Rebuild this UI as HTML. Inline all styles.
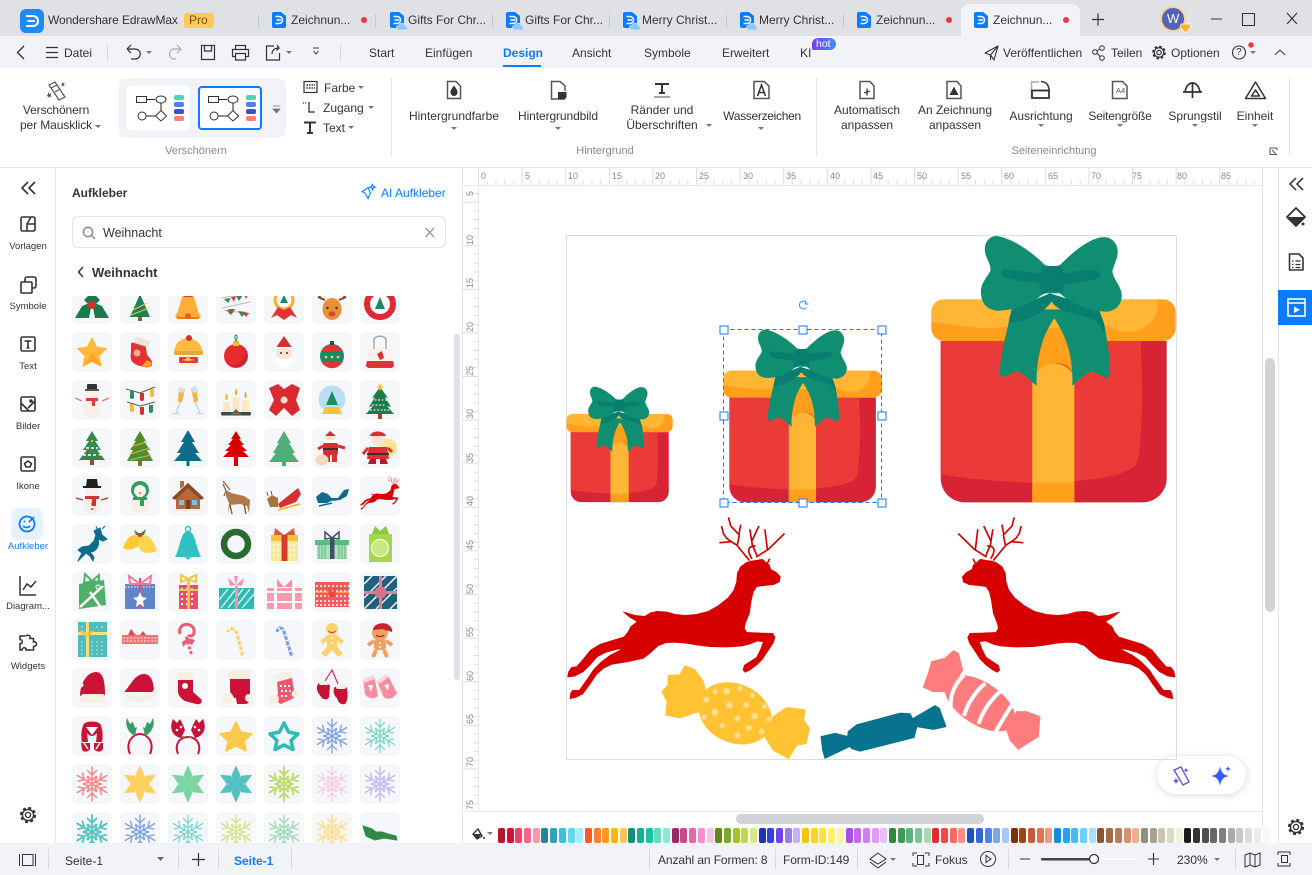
<!DOCTYPE html>
<html lang="de"><head><meta charset="utf-8"><title>Wondershare EdrawMax</title>
<style>
html,body{margin:0;padding:0;width:1312px;height:875px;overflow:hidden;background:#fff}
body{font-family:"Liberation Sans","Noto Sans CJK SC",sans-serif;font-size:12px;color:#333;position:relative}
.b{position:absolute}
.t{position:absolute;line-height:16px;white-space:nowrap}
.c{position:absolute;line-height:15px;white-space:nowrap;text-align:center;transform:translateX(-50%)}
.g{color:#8a8a8a}
.s{font-size:9.5px;color:#333}
.sw{position:absolute;left:498px;top:828px;height:15px;display:flex}
.sw i{display:block;width:7px;height:15px;margin-right:1.7px;border-radius:2px}
svg{position:absolute;left:0;top:0}
</style></head><body>
<div class="b" style="left:0;top:0;width:1312px;height:36px;background:#e0e1e5"></div>
<div class="b" style="left:0;top:36px;width:1312px;height:32px;background:#f2f3f8"></div>
<div class="b" style="left:961px;top:4px;width:119px;height:32px;background:#f2f3f8;border-radius:8px 8px 0 0"></div>
<div class="b" style="left:0;top:167px;width:1312px;height:1px;background:#e6e7eb"></div>
<div class="b" style="left:118px;top:78px;width:168px;height:60px;background:#f2f3f8;border-radius:8px"></div>
<div class="b" style="left:126px;top:86px;width:64px;height:44px;background:#fff;border-radius:4px"></div>
<div class="b" style="left:198px;top:86px;width:60px;height:40px;background:#fff;border:2px solid #0a7cff;border-radius:4px"></div>
<div class="b" style="left:184px;top:13px;width:30px;height:15px;background:#ffc85c;border-radius:3px"></div>
<div class="b" style="left:812px;top:38px;width:24px;height:12px;background:linear-gradient(90deg,#7a3cf0,#3f8cff);border-radius:7px 7px 7px 2px"></div>
<div class="b" style="left:55px;top:168px;width:1px;height:675px;background:#e6e7eb"></div>
<div class="b" style="left:462px;top:168px;width:1px;height:675px;background:#e6e7eb"></div>
<div class="b" style="left:1278px;top:168px;width:1px;height:675px;background:#e6e7eb"></div>
<div class="b" style="left:1262px;top:168px;width:1px;height:660px;background:#e6e7eb"></div>
<div class="b" style="left:11px;top:508px;width:32px;height:32px;background:#e7f2ff;border-radius:7px"></div>
<div class="b" style="left:72px;top:216px;width:372px;height:30px;border:1px solid #e3e4e8;border-radius:6px"></div>
<div class="b" style="left:454px;top:334px;width:6px;height:346px;background:#e0e1e6;border-radius:3px"></div>
<div class="b" style="left:1265px;top:358px;width:10px;height:254px;background:#d2d3d6;border-radius:5px"></div>
<div class="b" style="left:736px;top:814px;width:248px;height:10px;background:#d2d3d6;border-radius:5px"></div>
<div class="b" style="left:1278px;top:290px;width:34px;height:35px;background:#0a7cff"></div>
<div class="b" style="left:0;top:843px;width:1312px;height:32px;background:#f2f3f8"></div>
<div class="b" style="left:1157px;top:756px;width:89px;height:38px;background:#fff;border-radius:19px;box-shadow:0 1px 8px rgba(0,0,0,.16)"></div>
<div class="b" style="left:565.5px;top:234.5px;width:609px;height:523px;border:1px solid #dcdcdc"></div>

<div class="sw">
<i style="background:#b5172b"></i><i style="background:#d01135"></i><i style="background:#ee4266"></i><i style="background:#f5668a"></i><i style="background:#f999ad"></i>
<i style="background:#29819c"></i><i style="background:#2fa3bd"></i><i style="background:#42bddd"></i><i style="background:#62d8f0"></i><i style="background:#a7ecfb"></i>
<i style="background:#f85a26"></i><i style="background:#fb7f35"></i><i style="background:#fc9a20"></i><i style="background:#feb414"></i><i style="background:#ffc45c"></i>
<i style="background:#0f907c"></i><i style="background:#13b098"></i><i style="background:#17c4a2"></i><i style="background:#66d9c0"></i><i style="background:#8ce8d6"></i>
<i style="background:#9c2a62"></i><i style="background:#c84a8c"></i><i style="background:#e466ac"></i><i style="background:#fb8ccd"></i><i style="background:#f6c3e0"></i>
<i style="background:#62861a"></i><i style="background:#7aa82a"></i><i style="background:#a0c52b"></i><i style="background:#bfd850"></i><i style="background:#d8e88a"></i>
<i style="background:#2230b5"></i><i style="background:#3241d6"></i><i style="background:#6745ea"></i><i style="background:#9a7cf2"></i><i style="background:#c3b1f7"></i>
<i style="background:#fdc303"></i><i style="background:#fdd221"></i><i style="background:#fee23e"></i><i style="background:#fff06a"></i><i style="background:#fff59c"></i>
<i style="background:#a84fde"></i><i style="background:#c766f2"></i><i style="background:#d67cf5"></i><i style="background:#e09bf8"></i><i style="background:#ebbdfb"></i>
<i style="background:#2a8a3f"></i><i style="background:#3a9d55"></i><i style="background:#5cb27a"></i><i style="background:#7bc493"></i><i style="background:#a4dab5"></i>
<i style="background:#e52b2b"></i><i style="background:#f24a41"></i><i style="background:#f56a5e"></i><i style="background:#fa8f84"></i>
<i style="background:#1f50c0"></i><i style="background:#2f66d9"></i><i style="background:#4a83e9"></i><i style="background:#79a7f3"></i><i style="background:#a9c8f9"></i>
<i style="background:#7e3108"></i><i style="background:#a04510"></i><i style="background:#c65c3a"></i><i style="background:#db7650"></i><i style="background:#ec9a80"></i>
<i style="background:#0f8fdc"></i><i style="background:#25a4ee"></i><i style="background:#48baf8"></i><i style="background:#6fcffc"></i><i style="background:#a1e1fd"></i>
<i style="background:#8c5436"></i><i style="background:#a7694a"></i><i style="background:#b9795a"></i><i style="background:#d9926b"></i><i style="background:#eeb08c"></i>
<i style="background:#8f8f80"></i><i style="background:#a5a090"></i><i style="background:#c9c5b2"></i><i style="background:#dcd9c7"></i><i style="background:#f1efdd"></i>
<i style="background:#1a1a1a"></i><i style="background:#333"></i><i style="background:#4f4f4f"></i><i style="background:#666"></i><i style="background:#808080"></i><i style="background:#aaa"></i><i style="background:#c8c8c8"></i><i style="background:#dcdcdc"></i><i style="background:#ececec"></i><i style="background:#f7f7f7"></i>
</div>

<svg width="1312" height="875" viewBox="0 0 1312 875" fill="none">
<defs>
<pattern id="rh" x="478" y="168" width="43.6" height="17" patternUnits="userSpaceOnUse">
<path d="M.5 0V17" stroke="#dcdde1"/><path d="M9.2 12V17M17.9 12V17M26.7 12V17M35.4 12V17" stroke="#dcdde1"/></pattern>
<pattern id="rv" x="463" y="158" width="15" height="43.6" patternUnits="userSpaceOnUse">
<path d="M0 .5H15" stroke="#dcdde1"/><path d="M10 9.2H15M10 17.9H15M10 26.7H15M10 35.4H15" stroke="#dcdde1"/></pattern>
<g id="tabd"><path d="M0 2a2 2 0 012-2h7l5 4v10a2 2 0 01-2 2H2a2 2 0 01-2-2z" fill="#0a7cff"/><path d="M3.5 4.5H7a3.5 3.5 0 010 7H3.5M4.5 8H9" stroke="#fff" stroke-width="1.5"/></g>
<g id="tabc"><use href="#tabd"/><path d="M9 18a2.5 2.5 0 010-5 3.5 3.5 0 016.5 1 2 2 0 010 4z" fill="#8cc7ff" stroke="#e0e1e5" stroke-width=".7"/></g>
<g id="dd"><path d="M0 0h6l-3 3z" fill="#777"/></g>
<g id="gear" stroke="#333"><circle r="2.6" stroke-width="1.3"/><circle r="5.6" stroke-width="1.4"/><circle r="7" stroke-width="2.2" stroke-dasharray="3 2.5"/></g>
<g id="gift">
<path d="M92 333H770V745a72 72 0 01-72 72H164a72 72 0 01-72-72Z" fill="#d62336"/>
<path d="M92 333H692C696 430 700 520 690 640C688 690 680 705 665 715C610 745 540 750 430 758C320 760 200 750 92 733Z" fill="#ea3b38"/>
<path d="M367 440C390 390 470 385 493 440V817H367Z" fill="#ffb635"/>
<rect x="367" y="758" width="126" height="59" fill="#ff9f1c"/>
<path d="M433 265C400 310 385 370 380 430C400 395 470 385 490 430C490 370 470 310 433 265Z" fill="#ff9f1c"/>
<rect x="64" y="208" width="733" height="125" rx="38" fill="#ff9f1c"/>
<path d="M64 275V246a38 38 0 0138-38H742C750 270 700 310 650 305C600 300 560 260 520 280C420 310 300 280 250 295C180 295 120 282 64 275Z" fill="#ffb635"/>
<path d="M305 238C295 290 270 370 270 430C272 442 280 442 290 438C305 428 318 424 325 425C345 435 362 452 380 468C378 380 395 320 433 265C470 320 490 380 487 468C505 450 528 430 545 425C560 428 578 440 590 443C600 443 600 430 600 420C598 370 590 290 565 238Z" fill="#108e72"/>
<path d="M295 280C350 275 400 250 425 215C450 255 520 250 560 275C570 285 580 305 585 320C590 290 575 260 565 235L420 190L305 238Z" fill="#087e70"/>
<path d="M405 105C370 70 310 25 260 18C230 18 218 50 228 78C235 95 245 110 240 125C225 150 210 165 213 190C215 225 235 242 270 242C320 240 370 220 400 190L450 190C480 220 540 244 590 245C620 242 638 220 635 190C630 165 612 150 607 125C610 105 628 80 622 55C615 25 590 15 560 25C520 38 480 75 450 105C435 110 420 110 405 105Z" fill="#108e72"/>
<path d="M285 118L390 130V160C350 155 300 150 280 140C272 130 276 118 285 118ZM460 132C500 122 540 118 562 122C575 128 572 142 562 146C530 155 490 160 460 165Z" fill="#087e70"/>
<path d="M395 120C410 104 445 104 458 118C462 145 465 175 458 195C440 178 420 182 395 195C385 175 388 140 395 120Z" fill="#087e70"/>
</g>
<g id="deer" style="fill:currentColor">
<polygon stroke="currentColor" stroke-width="2" stroke-linejoin="round" points="190,306 225,316 255,319 272,308 292,304 320,306 345,313 375,316 410,313 445,304 475,287 505,263 522,240 530,215 532,190 542,170 560,157 575,153 590,151 608,148 618,158 628,165 632,178 650,188 661,200 658,216 640,224 610,227 590,230 580,245 574,270 568,310 556,340 553,355 560,367 600,369 638,370 645,382 640,398 622,425 608,447 590,465 570,480 556,487 549,480 553,466 570,455 590,442 602,418 610,395 592,393 570,402 545,408 500,411 450,410 410,405 380,400 345,397 318,398 295,407 272,428 250,445 205,455 155,463 130,475 110,493 90,522 68,552 48,562 30,566 32,550 38,541 58,541 80,510 100,480 125,455 150,436 188,417 170,418 135,428 112,440 90,465 70,485 45,498 23,501 26,485 35,472 50,470 72,445 92,420 120,403 155,392 192,381 205,365 212,350 232,335 210,322"/>
<path d="M567 150L530 105L514 95L480 98M514 95L500 85L490 70L485 50M532 105L538 75L512 48L506 24M537 72L542 46M590 140L625 118L672 72M622 118L615 60M590 135L577 105L570 60M576 92L596 50M575 145C560 120 565 108 585 108M600 150L612 155M628 148L622 160" stroke="currentColor" stroke-width="5" stroke-linecap="round" fill="none"/>
</g>
<g id="arm"><path d="M20 20V3M15.5 6.5L20 11L24.5 6.5M16 12.5L20 16.5L24 12.5"/></g>
<g id="fl" fill="none" stroke="currentColor" stroke-linecap="round"><use href="#arm"/><use href="#arm" transform="rotate(60 20 20)"/><use href="#arm" transform="rotate(120 20 20)"/><use href="#arm" transform="rotate(180 20 20)"/><use href="#arm" transform="rotate(240 20 20)"/><use href="#arm" transform="rotate(300 20 20)"/></g>
<g id="arm2"><path d="M20 20L16 11.5L20 2.5L24 11.5Z" fill="currentColor" stroke="currentColor" stroke-linejoin="round"/></g>
<g id="fl2" fill="none"><use href="#arm2"/><use href="#arm2" transform="rotate(60 20 20)"/><use href="#arm2" transform="rotate(120 20 20)"/><use href="#arm2" transform="rotate(180 20 20)"/><use href="#arm2" transform="rotate(240 20 20)"/><use href="#arm2" transform="rotate(300 20 20)"/></g>
<clipPath id="cp"><rect x="72" y="296" width="340" height="547"/></clipPath>
<g id="cell"><rect width="40" height="40" rx="6" fill="#f6f7fb"/></g>
<g id="diag">
<rect x="136.5" y="96.5" width="10" height="6" stroke="#333"/><ellipse cx="161" cy="99.5" rx="5" ry="3.5" stroke="#333"/><circle cx="142" cy="116" r="4" stroke="#333"/><path d="M161 110.5L166.5 116L161 121L155.5 116Z" stroke="#333"/><path d="M147 99.5H155M161 103V110M146 116H155" stroke="#222"/>
<rect x="174" y="95" width="10" height="5" rx="2" fill="#4fd1b5"/><rect x="174" y="102" width="10" height="5" rx="2" fill="#4f7ff0"/><rect x="174" y="109" width="10" height="5" rx="2" fill="#3f4fc4"/><rect x="174" y="116" width="10" height="5" rx="2" fill="#ff7d7d"/>
</g>
<g id="sq"><rect x="-3.5" y="-3.5" width="8" height="8" fill="#fff" stroke="#0a7cff"/></g>
</defs>

<!-- tab bar -->
<rect x="20" y="9" width="24" height="24" rx="6" fill="#1e8cf8"/><path d="M26 16H33a5 5 0 010 10H26M27.5 21H35" stroke="#fff" stroke-width="2"/>
<path d="M258.5 14V28M375.5 14V28M492.5 14V28M609.5 14V28M726.5 14V28M843.5 14V28" stroke="#c8c9cd"/>
<use href="#tabd" x="272" y="12"/><use href="#tabc" x="390" y="12"/><use href="#tabc" x="506" y="12"/><use href="#tabc" x="623" y="12"/><use href="#tabc" x="740" y="12"/><use href="#tabd" x="857" y="12"/><use href="#tabd" x="974" y="12"/>
<circle cx="364" cy="20" r="3" fill="#f5333f"/><circle cx="949" cy="20" r="3" fill="#f5333f"/><circle cx="1066" cy="20" r="3" fill="#f5333f"/>
<path d="M1098 13.5V25.5M1092 19.5H1104" stroke="#333" stroke-width="1.2"/>
<circle cx="1173" cy="19" r="12" fill="#5362ba" stroke="#fbd38a" stroke-width="2"/>
<path d="M1181 24h9l1 3-5.5 6-5.5-6z" fill="#f9b62e" stroke="#fff" stroke-width=".7"/>
<path d="M1211 19H1222M1242.5 13.5H1254.5V25.5H1242.5ZM1287 13L1297 24M1297 13L1287 24" stroke="#333" stroke-width="1.1"/>

<!-- toolbar -->
<path d="M24 46L17.5 52.5L24 59" stroke="#333" stroke-width="1.3"/>
<path d="M46 47.5H58M46 52.5H58M46 57.5H58" stroke="#333" stroke-width="1.2"/>
<path d="M107.5 44V61M340.5 44V61" stroke="#d8d9dd"/>
<path d="M127 49L131 45M127 49L131 53M127 49H135C142 49 142 59 135 59H131" stroke="#333" stroke-width="1.2"/>
<use href="#dd" x="146" y="51"/>
<path d="M181 49L177 45M181 49L177 53M181 49H174C168 49 168 59 174 59H176" stroke="#aaa" stroke-width="1.2"/>
<path d="M201.5 45.5H214.5V59.5H201.5ZM204.5 45.5V51H211.5V45.5" stroke="#333" stroke-width="1.2"/>
<path d="M235.5 49.5V45.5H245.5V49.5M235.5 56.5H232.5V49.5H248.5V56.5H245.5M235.5 53.5H245.5V60H235.5Z" stroke="#333" stroke-width="1.2"/>
<path d="M274 46H266.5V60H279.5V53M272 54C272 50 275 48 279 48L277 45M279 48L276.5 50.5" stroke="#333" stroke-width="1.2"/>
<use href="#dd" x="286" y="51"/>
<path d="M313 48H319M313.5 51L316 54L318.5 51" stroke="#444" stroke-width="1"/>
<rect x="503" y="65" width="38" height="2" fill="#0a7cff"/>
<path d="M985 53L998 46L994 60L990.5 55ZM990.5 55L998 46M990.5 55V60" stroke="#333" stroke-width="1.1" stroke-linejoin="round"/>
<circle cx="1095" cy="52" r="2.3" stroke="#333"/><circle cx="1102" cy="48" r="2.3" stroke="#333"/><circle cx="1102" cy="58" r="2.3" stroke="#333"/><path d="M1097 51L1100 49M1097 53L1100 56.5" stroke="#333"/>
<use href="#gear" transform="translate(1159,52.5) scale(.85)"/>
<circle cx="1239" cy="52.5" r="6.5" stroke="#333" stroke-width="1.1"/><use href="#dd" x="1250" y="51"/><circle cx="1251" cy="45" r="2.7" fill="#f5333f"/>
<path d="M1275 55L1280 50L1285 55" stroke="#444" stroke-width="1.1"/>

<!-- ribbon -->
<g stroke="#555" stroke-width="1.2"><path d="M49 85L55 82L65 97L59 100Z"/><path d="M51 88L57 85M60 89L55 92"/></g><path d="M48 92l1.5 2 2-1-1 2 1.5 1.5-2 0-1 2-.5-2-2-.5 1.5-1.5ZM62 82l1 1.5 1.5-.5-.5 1.5 1 1-1.5 0-.5 1.500-.5-1.5-1.5-.5 1-1Z" fill="#555"/>
<use href="#dd" x="95" y="125"/>
<use href="#diag"/><use href="#diag" x="72"/>
<path d="M273 106H280M273 109h7l-3.5 4z" fill="#777" stroke="#777" stroke-width=".8"/>
<rect x="304" y="81.5" width="13" height="11" stroke="#333" stroke-width="1.2" fill="#fff"/><path d="M306.500 85H315M306.500 88H315" stroke="#333" stroke-width="1.5" stroke-dasharray="1.5 1"/>
<use href="#dd" x="358" y="86"/><use href="#dd" x="368" y="106"/><use href="#dd" x="348" y="126"/>
<path d="M309 102V112H315" stroke="#333" stroke-width="1.3"/><path d="M303 103H306" stroke="#333" stroke-width="1.3" stroke-dasharray="1 1"/>
<path d="M304 122.5H316M310 122.5V133M307 133H313" stroke="#333" stroke-width="2"/>
<path d="M391.5 78V157M816.5 78V157M1289.5 78V157" stroke="#e6e7eb"/>
<path d="M447.5 81.5H456L460.5 86V98.5H447.5Z" stroke="#555" stroke-width="1.5"/><path d="M454 86C451 90 450.5 91 450.500 93a3.5 3.5 0 007 0C457.5 91 457 90 454 86Z" transform="translate(0,-.5)" fill="#333"/>
<path d="M565 99H551.5V81.5H560L565 86V91" stroke="#555" stroke-width="1.5"/><path d="M558 92H566.5V98L563.5 99.5H558Z" fill="#333"/>
<use href="#dd" x="451" y="127"/><use href="#dd" x="555" y="127"/><use href="#dd" x="706" y="124"/><use href="#dd" x="758" y="127"/>
<path d="M655 84H669M662 84V93M659 93H665" stroke="#333" stroke-width="2"/><path d="M654 97H670" stroke="#888" stroke-width="1.5"/>
<path d="M754 81.5H764L769 86V98.5H754Z" stroke="#555" stroke-width="1.5"/><path d="M757.500 96L761.500 85L765.500 96M759 92.500H764" stroke="#333" stroke-width="1.5"/>
<path d="M860 81.5H870L874 86V98.5H860Z" stroke="#555" stroke-width="1.5"/><path d="M864 90.5H867V93.5M870 89.5H867V86.5" stroke="#333" stroke-width="1.3" transform="translate(0,2)"/>
<path d="M947 81.5H957L961 86V98.5H947Z" stroke="#555" stroke-width="1.5"/><path d="M954 86.5L958.5 95H949.5Z" fill="#333"/>
<path d="M1031.5 97V82H1039M1031.5 82V90" stroke="#aaa" stroke-width="1.5"/><path d="M1039 90.5H1049C1049 85 1046 82 1041 81.5" stroke="#333" stroke-width="1.5"/><rect x="1032" y="90.5" width="17" height="7.5" stroke="#333" stroke-width="1.8"/>
<path d="M1112.5 81.5H1122.5L1127 86V98.5H1112.5Z" stroke="#555" stroke-width="1.5"/>
<path d="M1183 92H1202M1192.5 82V98M1185 92C1186 86 1189 83 1192.5 83C1196 83 1199 86 1200 92" stroke="#333" stroke-width="1.7"/>
<path d="M1255.5 82L1265.5 98.5H1245.5ZM1255.5 90L1259.5 96H1251.5Z" stroke="#333" stroke-width="1.5" stroke-linejoin="round"/>
<use href="#dd" x="1038" y="124"/><use href="#dd" x="1117" y="124"/><use href="#dd" x="1192" y="124"/><use href="#dd" x="1252" y="124"/>
<path d="M1270 148V154.5H1277M1270 148H1277V150M1272 150L1276 154" stroke="#555" stroke-width="1"/>

<!-- left sidebar -->
<path d="M28 182L22 188L28 194M35 182L29 188L35 194" stroke="#333" stroke-width="1.6"/>
<g stroke="#333" stroke-width="1.6" stroke-linejoin="round">
<rect x="21" y="217" width="14" height="14" rx="1.5"/><path d="M27 231V224H35M27 224L31 217"/>
<rect x="21" y="282" width="11" height="11" rx="1"/><path d="M25 282V279C25 277 26 277 27 277H34C35 277 36 278 36 279V286C36 287 35 288 34 288H32"/>
<rect x="21" y="337" width="14" height="14" rx="1.5"/><path d="M24.5 341H31.5M28 341V348M26.5 348H29.5"/>
<rect x="21" y="397" width="14" height="14" rx="1.5"/><path d="M21 403L29 411M35 401L28 408"/><circle cx="31" cy="401" r="1" fill="#333"/>
<rect x="21" y="457" width="14" height="14" rx="1.5"/><path d="M28 461L31.5 463.5L30 467H26L24.5 463.5Z"/>
</g>
<circle cx="27" cy="524" r="7.5" stroke="#0a7cff" stroke-width="1.8"/><path d="M23 526c2 2 5 2 7 0M24 521l1 1M29 521l1 1M34 517l-5 5" stroke="#0a7cff" stroke-width="1.6"/>
<path d="M20 576V595H36M23 590L27 584L31 587L36 581" stroke="#333" stroke-width="1.5"/>
<path d="M26 636c2-2 5 0 4 2.5h3.5v3.5c3-1.5 5 4 0 4.5v3.5H26c1-3-4-3-4 0H20v-6.5c3 1 3-4 0-4v-3.5h5.5" stroke="#333" stroke-width="1.5"/>
<use href="#gear" transform="translate(28,815)"/>

<!-- panel -->
<path d="M368 188L370.5 193.5L368 199L365 193.5L362 192L365 190.5ZM372.5 185l.8 2 2 .7-2 .8-.8 2-.8-2-2-.8 2-.7Z" stroke="#0a7cff" stroke-width="1.1" transform="translate(0,-.5)"/>
<circle cx="88" cy="232" r="4.6" stroke="#888" stroke-width="1.5"/><path d="M91.5 235.5L95 239" stroke="#888" stroke-width="1.5"/>
<path d="M425.5 228L434 237M434 228L425.5 237" stroke="#999" stroke-width="1.3"/>
<path d="M83 267L78.5 272L83 277" stroke="#333" stroke-width="1.5"/>

<!-- stickers -->
<g clip-path="url(#cp)">
<g id="grid">
<use href="#cell" x="72" y="284"/><use href="#cell" x="120" y="284"/><use href="#cell" x="168" y="284"/><use href="#cell" x="216" y="284"/><use href="#cell" x="264" y="284"/><use href="#cell" x="312" y="284"/><use href="#cell" x="360" y="284"/>
<use href="#cell" x="72" y="332"/><use href="#cell" x="120" y="332"/><use href="#cell" x="168" y="332"/><use href="#cell" x="216" y="332"/><use href="#cell" x="264" y="332"/><use href="#cell" x="312" y="332"/><use href="#cell" x="360" y="332"/>
<use href="#cell" x="72" y="380"/><use href="#cell" x="120" y="380"/><use href="#cell" x="168" y="380"/><use href="#cell" x="216" y="380"/><use href="#cell" x="264" y="380"/><use href="#cell" x="312" y="380"/><use href="#cell" x="360" y="380"/>
<use href="#cell" x="72" y="428"/><use href="#cell" x="120" y="428"/><use href="#cell" x="168" y="428"/><use href="#cell" x="216" y="428"/><use href="#cell" x="264" y="428"/><use href="#cell" x="312" y="428"/><use href="#cell" x="360" y="428"/>
<use href="#cell" x="72" y="476"/><use href="#cell" x="120" y="476"/><use href="#cell" x="168" y="476"/><use href="#cell" x="216" y="476"/><use href="#cell" x="264" y="476"/><use href="#cell" x="312" y="476"/><use href="#cell" x="360" y="476"/>
<use href="#cell" x="72" y="524"/><use href="#cell" x="120" y="524"/><use href="#cell" x="168" y="524"/><use href="#cell" x="216" y="524"/><use href="#cell" x="264" y="524"/><use href="#cell" x="312" y="524"/><use href="#cell" x="360" y="524"/>
<use href="#cell" x="72" y="572"/><use href="#cell" x="120" y="572"/><use href="#cell" x="168" y="572"/><use href="#cell" x="216" y="572"/><use href="#cell" x="264" y="572"/><use href="#cell" x="312" y="572"/><use href="#cell" x="360" y="572"/>
<use href="#cell" x="72" y="620"/><use href="#cell" x="120" y="620"/><use href="#cell" x="168" y="620"/><use href="#cell" x="216" y="620"/><use href="#cell" x="264" y="620"/><use href="#cell" x="312" y="620"/><use href="#cell" x="360" y="620"/>
<use href="#cell" x="72" y="668"/><use href="#cell" x="120" y="668"/><use href="#cell" x="168" y="668"/><use href="#cell" x="216" y="668"/><use href="#cell" x="264" y="668"/><use href="#cell" x="312" y="668"/><use href="#cell" x="360" y="668"/>
<use href="#cell" x="72" y="716"/><use href="#cell" x="120" y="716"/><use href="#cell" x="168" y="716"/><use href="#cell" x="216" y="716"/><use href="#cell" x="264" y="716"/><use href="#cell" x="312" y="716"/><use href="#cell" x="360" y="716"/>
<use href="#cell" x="72" y="764"/><use href="#cell" x="120" y="764"/><use href="#cell" x="168" y="764"/><use href="#cell" x="216" y="764"/><use href="#cell" x="264" y="764"/><use href="#cell" x="312" y="764"/><use href="#cell" x="360" y="764"/>
<use href="#cell" x="72" y="812"/><use href="#cell" x="120" y="812"/><use href="#cell" x="168" y="812"/><use href="#cell" x="216" y="812"/><use href="#cell" x="264" y="812"/><use href="#cell" x="312" y="812"/><use href="#cell" x="360" y="812"/>
</g>
<!-- row 0 -->
<g transform="translate(72,284)"><path d="M3 34L10 22L20 18L17 34Z M37 34L30 22L20 18L23 34Z M20 8L12 16L20 24L28 16Z" fill="#1b7a4a"/><circle cx="20" cy="21" r="4" fill="#d62f2f"/></g>
<g transform="translate(120,284)"><path d="M20 10L30 33H10Z" fill="#1f7f5c"/><path d="M13 26L27 19M11 31L29 24" stroke="#f4c542"/><rect x="18" y="33" width="4" height="4" fill="#9b5b2e"/></g>
<g transform="translate(168,284)"><path d="M20 8C12 8 13 24 7 33H33C27 24 28 8 20 8Z" fill="#ffae34"/><path d="M7 33H33L30 35H10Z" fill="#f07d12"/><circle cx="20" cy="32" r="3" fill="#e0641a"/><path d="M13 8H27L24 13H16Z" fill="#e33b3b"/></g>
<g transform="translate(216,284)"><path d="M6 14L34 8M6 24L34 18M8 26L34 30" stroke="#bbb"/><path d="M8 15l4 4 3-5ZM20 12l3 5 4-6ZM10 26l5 5 3-4ZM22 27l4 6 4-5Z" fill="#2e8b57"/><path d="M15 13l3 5 2-6ZM12 25l4 5 3-5ZM28 10l2 5 3-6ZM26 28l4 5 3-4Z" fill="#d93c3c"/></g>
<g transform="translate(264,284)"><circle cx="20" cy="16" r="9" stroke="#fbb02c" stroke-width="3"/><path d="M7 34L14 23L20 26L26 23L33 34L27 31L20 36L13 31Z" fill="#e23434"/><path d="M20 11L24 19H16Z" fill="#1f8a62"/></g>
<g transform="translate(312,284)"><ellipse cx="20" cy="25" rx="9.5" ry="11" fill="#e89035"/><circle cx="15.5" cy="24" r="1.2" fill="#333"/><circle cx="24.5" cy="24" r="1.2" fill="#333"/><ellipse cx="20" cy="30" rx="3.5" ry="2.5" fill="#d9423b"/><path d="M13 16L6 13M27 16L34 13M9 15L7 11M31 15L33 11" stroke="#8a3d20" stroke-width="1.8"/></g>
<g transform="translate(360,284)"><circle cx="20" cy="20" r="13" stroke="#dd2a33" stroke-width="6"/><circle cx="20" cy="20" r="9.5" fill="#fff"/><path d="M20 13L25 25H15Z" fill="#1f8a62"/></g>
<!-- row 1 -->
<g transform="translate(72,332)"><path d="M20 6L24.5 15L34.5 16.5L27 24L29 34L20 29.5L11 34L13 24L5.5 16.5L15.5 15Z" fill="#ffb93a" stroke="#ffb93a" stroke-linejoin="round"/><path d="M20 20L29 34L20 29.5L13 33Z" fill="#ffa423"/></g>
<g transform="translate(120,332)"><path d="M11 11L25 9L27 23C31 27 33 30 32 33C29 37 24 35 21 34C14 33 9 29 11 21Z" fill="#e4302f"/><path d="M16 4L31 10L27 15L14 11Z" fill="#f3e3d3"/><circle cx="17" cy="21" r="3.5" fill="#f6a8a0"/><path d="M22 34C27 36 31 35 32 31L27 28Z" fill="#f7a623"/></g>
<g transform="translate(168,332)"><path d="M6 20C7 10 14 6 20 6C28 6 33 12 35 20Z" fill="#fdbb42"/><circle cx="21" cy="6" r="3" fill="#d62f2f"/><rect x="6" y="19" width="29" height="4" rx="2" fill="#e9a638"/><rect x="11" y="25" width="19" height="6" rx="1" fill="#e33b3b"/><path d="M20 23L22 27L27 28L20 29L14 28L18 27Z" fill="#ffd24b"/><rect x="12" y="31" width="17" height="5" rx="2" fill="#fff3e3"/></g>
<g transform="translate(216,332)"><circle cx="20" cy="24" r="12" fill="#e52b2b"/><path d="M30 18C30 28 24 34 14 34C24 37 34 30 30 18Z" fill="#c91f2a"/><rect x="17" y="9" width="6" height="5" fill="#f7b733"/><path d="M20 9C18 5 19 3 20 3C21 3 22 5 20 9Z" stroke="#2a8a5c"/></g>
<g transform="translate(264,332)"><path d="M20 4L29 17H11Z" fill="#dc2f2f"/><rect x="10" y="15" width="20" height="4" rx="2" fill="#fff"/><ellipse cx="20" cy="22" rx="8" ry="6" fill="#fde4d2"/><path d="M11 24C12 34 17 37 20 37C23 37 28 34 29 24C25 28 15 28 11 24Z" fill="#fff"/><circle cx="17" cy="21" r="1" fill="#333"/><circle cx="23" cy="21" r="1" fill="#333"/></g>
<g transform="translate(312,332)"><circle cx="20" cy="24" r="12" fill="#1b8a61"/><path d="M9.5 19A12 12 0 0130.5 19ZM9.5 30A12 12 0 0030.5 30Z" fill="#e23636"/><circle cx="14" cy="25" r="1.3" fill="#ffd24b"/><circle cx="20" cy="25" r="1.3" fill="#ffd24b"/><circle cx="26" cy="25" r="1.3" fill="#ffd24b"/><rect x="18" y="9" width="4" height="4" fill="#444"/></g>
<g transform="translate(360,332)"><path d="M8 16H32L34 32C34 35 32 36 30 36H10C8 36 6 35 6 32Z" fill="#fdf0ee"/><path d="M14 17V8C14 3 26 3 26 8V17" stroke="#a9a9a9" stroke-width="1.5"/><path d="M7 29H33L34 33C34 35 32 36 30 36H10C8 36 6 35 6 33Z" fill="#e0323a"/><path d="M17 22L22 19L24 26L20 28Z" fill="#dc2f2f"/></g>
<!-- row 2 -->
<g transform="translate(72,380)"><circle cx="20" cy="14" r="6.5" fill="#f7f0ea"/><ellipse cx="20" cy="28" rx="10" ry="10" fill="#f7f0ea"/><rect x="15" y="4" width="10" height="6" rx="1" fill="#333"/><rect x="13" y="9" width="14" height="2" fill="#555"/><path d="M14 18H26V21H23V26H20V21H14Z" fill="#e23a3a"/><path d="M10 21L3 18M30 21L37 18" stroke="#c98484" stroke-width="1.3"/></g>
<g transform="translate(120,380)"><path d="M6 9L20 13L35 7M7 22L20 26L35 22" stroke="#555"/><path d="M10 11h4v6a2 2 0 01-4 0Z" fill="#2e8b57"/><path d="M20 13h4v6a2 2 0 01-4 0Z" fill="#d62f2f"/><path d="M30 9h4v6a2 2 0 01-4 0Z" fill="#f5b932"/><path d="M10 24h4v6a2 2 0 01-4 0Z" fill="#f5b932"/><path d="M20 27h4v6a2 2 0 01-4 0Z" fill="#d62f2f"/><path d="M29 25h4v6a2 2 0 01-4 0Z" fill="#2e8b57"/></g>
<g transform="translate(168,380)"><path d="M11 7L17 9L14 22C12 23 10 22 10 20Z" fill="#f6b244"/><path d="M28 6L23 8L26 22C28 23 30 22 30 20Z" fill="#f6b244"/><path d="M11 7L17 9L15 13L10 12ZM28 6L23 8L25 13L30 12Z" fill="#c9e1f5"/><path d="M12 22L8 33M27 22L32 33M4 34L12 33M28 33L36 34" stroke="#bcd5e8" stroke-width="1.3"/></g>
<g transform="translate(216,380)"><rect x="5" y="32" width="30" height="3.5" rx="1.5" fill="#444"/><rect x="7" y="22" width="7" height="10" fill="#fde7c7"/><rect x="16.5" y="17" width="7" height="15" fill="#fde7c7"/><rect x="26" y="20" width="7" height="12" fill="#fde7c7"/><path d="M10.5 13C9 17 9 20 10.5 20S12 17 10.5 13ZM20 8C18.5 12 18.5 15 20 15S21.5 12 20 8ZM29.5 11C28 15 28 18 29.5 18S31 15 29.5 11Z" fill="#f7a623"/><path d="M14 35L20 29L26 35Z" fill="#1f8a5c"/><circle cx="20" cy="33" r="2" fill="#d62f2f"/></g>
<g transform="translate(264,380)"><path d="M5 8L14 4L20 9L28 4L36 8L32 20L36 30L28 36L20 28L12 36L5 30L10 20Z" fill="#d82a2f"/><circle cx="20" cy="20" r="3.5" fill="#f9dcd2"/></g>
<g transform="translate(312,380)"><circle cx="20" cy="19" r="13.5" fill="#bcdef5"/><path d="M20 11L26 25H14Z" fill="#1f8a62"/><path d="M13 27H27L30 34H10Z" fill="#fcc13b"/></g>
<g transform="translate(360,380)"><path d="M20 7L28 18L25 17L31 27L27 26L34 34H6L13 26L9 27L15 17L12 18Z" fill="#1f7a48"/><path d="M12 25H26M11 20H27M10 30H31" stroke="#fff" stroke-dasharray="2 1.5"/><path d="M20 3L21.5 6L24 7L21.5 8L20 11L18.5 8L16 7L18.5 6Z" fill="#fbbf3a"/><rect x="18" y="34" width="4" height="5" fill="#8d4f26"/></g>
<!-- row 3 -->
<g transform="translate(72,428)"><path d="M20 3L26 13L23 13L29 22L25 22L33 32H7L15 22L11 22L17 13L14 13Z" fill="#2d8b4e"/><path d="M14 20H26M11 27H29" stroke="#fff" stroke-width="1.5" stroke-dasharray="3 2"/><circle cx="20" cy="13" r="1.2" fill="#f5b932"/><circle cx="15" cy="24" r="1.2" fill="#d62f2f"/><circle cx="26" cy="28" r="1.2" fill="#d62f2f"/><rect x="18" y="32" width="4" height="5" fill="#8d4f26"/></g>
<g transform="translate(120,428)"><path d="M20 3L26 13L24 13L30 22L27 22L33 33H7L13 22L10 22L16 13L14 13Z" fill="#4e8c2d"/><path d="M13 18L27 14M10 26L30 20M10 32L31 27" stroke="#d9b24a"/><rect x="18" y="33" width="4" height="5" fill="#8d6a2e"/></g>
<g transform="translate(168,428)"><path d="M20 2L27 14L24 14L31 25L27 25L34 33H6L13 25L9 25L16 14L13 14Z" fill="#0e6b8a"/><rect x="18.5" y="33" width="3" height="5" fill="#0e6b8a"/></g>
<g transform="translate(216,428)"><path d="M20 3L25 11H23L28 17H25L31 23H27L33 29H7L13 23H9L15 17H12L17 11H15Z" fill="#d60000"/><rect x="18" y="29" width="4" height="9" fill="#d60000"/></g>
<g transform="translate(264,428)"><path d="M20 3L27 15H25L31 25H28L35 34H5L12 25H9L15 15H13Z" fill="#4fae77"/><rect x="18" y="34" width="4" height="4" fill="#4fae77"/></g>
<g transform="translate(312,428)"><circle cx="18" cy="10" r="4.5" fill="#fde4d2"/><path d="M13 8L18 3L24 8Z" fill="#d62f2f"/><path d="M14 12C16 17 21 17 23 12Z" fill="#fff"/><rect x="11" y="15" width="15" height="12" rx="2" fill="#d62f2f"/><path d="M26 18L33 20M11 18L6 21" stroke="#d62f2f" stroke-width="3"/><rect x="11" y="20" width="15" height="2" fill="#333"/><path d="M13 27H18V34H13ZM20 27H25V34H20Z" fill="#d62f2f"/><ellipse cx="10" cy="32" rx="6.5" ry="5.5" fill="#f5d9bf"/></g>
<g transform="translate(360,428)"><circle cx="28" cy="20" r="9" fill="#fae38e"/><circle cx="18" cy="11" r="7" fill="#fde4d2"/><path d="M10 8C11 2 24 2 26 8Z" fill="#dc2f2f"/><path d="M10 14C13 21 23 21 26 14L24 18H12Z" fill="#fff"/><path d="M9 19H27L29 31H7Z" fill="#dc2f2f"/><path d="M8 20L3 26M28 20L32 24" stroke="#dc2f2f" stroke-width="3"/><rect x="7" y="25" width="22" height="2" fill="#333"/><path d="M10 31H16V36H8ZM20 31H26L28 36H20Z" fill="#b31e2a"/></g>
<!-- row 4 -->
<g transform="translate(72,476)"><circle cx="20" cy="16" r="7" fill="#f7f0ea"/><ellipse cx="20" cy="30" rx="9.5" ry="8" fill="#f7f0ea"/><path d="M14 10L15 3H25L26 10H29V12H11V10Z" fill="#222"/><path d="M13 20H27V23H24V30H20V23H13Z" fill="#d62f2f"/><path d="M11 24L4 22M29 24L36 22" stroke="#b5524a" stroke-width="1.5"/><circle cx="20" cy="28" r="1" fill="#d62f2f"/><circle cx="20" cy="33" r="1" fill="#d62f2f"/></g>
<g transform="translate(120,476)"><circle cx="20" cy="14" r="9" fill="#2ea05c"/><circle cx="20" cy="15" r="6" fill="#f7f0ea"/><ellipse cx="20" cy="29" rx="10" ry="8.5" fill="#f7f0ea"/><path d="M13 21H27V24H24V30H20V24H13Z" fill="#2ea05c"/><circle cx="20" cy="17" r="1" fill="#e2603a"/></g>
<g transform="translate(168,476)"><path d="M4 22L20 7L36 22H32V33H8V22Z" fill="#b5693a"/><path d="M4 22L20 7L36 22L33 24L20 12L7 24Z" fill="#8a4a24"/><rect x="11" y="24" width="5" height="5" fill="#7cc1ea"/><rect x="24" y="24" width="5" height="5" fill="#7cc1ea"/><rect x="18" y="24" width="4.5" height="9" fill="#7a3f1a"/><rect x="4" y="33" width="32" height="2" fill="#f2efe6"/><path d="M12 5L16 5L16 10L12 13Z" fill="#b5693a"/></g>
<g transform="translate(216,476)"><path d="M7 8L10 15L8 20M7 5L14 14" stroke="#8a6238" stroke-width="1.2"/><path d="M10 14L15 17L28 20L34 24L33 37L31 30L24 28L14 29L12 37L13 27L10 20Z" fill="#b27a48"/><path d="M14 29L16 38M28 28L30 38" stroke="#8a6238" stroke-width="1.5"/></g>
<g transform="translate(264,476)"><path d="M14 28L34 12L37 18L32 26L16 32Z" fill="#d62f2f"/><path d="M14 34L36 28" stroke="#f5b932" stroke-width="1.8"/><path d="M3 23L8 19L14 22L14 31H6Z" fill="#a97241"/><path d="M4 20L3 16M8 19L7 15" stroke="#8a5a30"/></g>
<g transform="translate(312,476)"><path d="M4 21L10 16L16 18L21 24L15 27H6Z" fill="#0e6b8a"/><path d="M19 22L26 22L32 14L37 13L35 20L28 24L20 25Z" fill="#0e6b8a"/><path d="M7 30L20 27" stroke="#0e6b8a" stroke-width="1.5"/></g>
<g transform="translate(359,475) scale(.0607)" style="color:#d60000"><use href="#deer"/></g>
<!-- row 5 -->
<g transform="translate(72,524)"><path d="M28 4L30 11L35 15L31 17L26 15C28 22 24 28 18 28L22 33L21 37L18 32L14 29L6 37L10 29L6 26L10 23L17 22L22 17L24 11L22 7ZM30 5L33 2M25 5L24 2" fill="#0e6b8a" stroke="#0e6b8a" stroke-linejoin="round"/></g>
<g transform="translate(120,524)"><path d="M19 11C9 9 5 18 3 24C8 27 15 26 20 20C22 16 22 13 19 11Z" fill="#ffc933"/><path d="M21 11C30 10 34 18 37 27C31 30 22 30 19 24C17 18 18 13 21 11Z" fill="#ffd34f"/><path d="M14 6L20 10L26 5L24 11H16Z" fill="#2a8a4c"/><circle cx="20" cy="11" r="2" fill="#d62f2f"/></g>
<g transform="translate(168,524)"><circle cx="20" cy="5" r="2.5" stroke="#2fc2c2" stroke-width="1.5"/><path d="M20 7C12 8 13 22 7 33H33C27 22 28 8 20 7Z" fill="#2fc2c2"/><path d="M17 33H23L20 36Z" fill="#2fc2c2"/></g>
<g transform="translate(216,524)"><circle cx="20" cy="20" r="12" stroke="#2a6b2f" stroke-width="6.5"/></g>
<g transform="translate(264,524)"><rect x="7" y="12" width="27" height="25" fill="#ffe89c"/><path d="M9 16h23M9 21h23M9 26h23M9 31h23" stroke="#fff" stroke-width="2" stroke-dasharray="2 2"/><rect x="7" y="11" width="27" height="6" fill="#f3c33e"/><rect x="17.5" y="11" width="6" height="26" fill="#d83a30"/><path d="M20 11L11 4L10 11ZM20 11L30 4L31 11Z" fill="#e2533f"/></g>
<g transform="translate(312,524)"><rect x="3" y="16" width="34" height="5" fill="#5dbb7c"/><rect x="5" y="21" width="30" height="14" fill="#a9dfb9"/><path d="M7 21V35M10 21V35M13 21V35M27 21V35M30 21V35M33 21V35" stroke="#5dbb7c"/><rect x="18" y="14" width="4.5" height="21" fill="#3f4f66"/><path d="M20 14L13 8L13 15ZM20 14L27 8L27 15Z" stroke="#3f4f66" stroke-width="1.5"/></g>
<g transform="translate(360,524)"><rect x="9" y="10" width="23" height="28" rx="1" fill="#a5d64b"/><path d="M12 10L15 2L20 7L26 2L29 10Z" fill="#8cc63f"/><circle cx="20" cy="24" r="8.5" fill="#c6ea80" stroke="#fff"/></g>
<!-- row 6 -->
<g transform="translate(72,572)"><path d="M7 12L32 8L34 33L7 37Z" fill="#4fae68"/><path d="M8 35L31 14M18 20L30 37" stroke="#fff" stroke-width="2.5"/><path d="M20 9L13 2L12 11ZM20 9L27 3L27 10Z" stroke="#4fae68" stroke-width="2"/><circle cx="26" cy="15" r="2" stroke="#fff"/></g>
<g transform="translate(120,572)"><rect x="5" y="12" width="30" height="25" fill="#5f85c9"/><path d="M5 15H35" stroke="#fff" stroke-dasharray="1.5 1.5"/><rect x="19" y="6" width="2" height="31" fill="#e94a75"/><path d="M20 12L9 4L10 12ZM20 12L31 4L30 12Z" stroke="#f2789a" stroke-width="2"/><path d="M20 20L22 25L27 26L23 29L24 35L20 32L16 35L17 29L13 26L18 25Z" fill="#fff"/></g>
<g transform="translate(168,572)"><rect x="11" y="13" width="19" height="24" fill="#ef4d64"/><path d="M13 17h15M13 22h15M13 27h15M13 32h15" stroke="#fff" stroke-width="2" stroke-dasharray="2 3"/><rect x="19" y="6" width="3" height="31" fill="#f4c542"/><rect x="11" y="17" width="19" height="2" fill="#f4c542"/><path d="M20 7L13 3L13 10ZM20 7L28 3L28 10Z" stroke="#f4c542" stroke-width="2"/></g>
<g transform="translate(216,572)"><rect x="3" y="16" width="35" height="21" fill="#2cbcb6"/><path d="M5 36L20 17M12 36L27 17M19 36L34 17M26 36L38 22M3 28L12 17" stroke="#fff" stroke-width="1.2"/><rect x="19" y="14" width="3" height="23" fill="#f78fae"/><path d="M20 13L12 6L14 14ZM20 13L28 6L26 14ZM20 13L18 4H22Z" fill="#f78fae"/></g>
<g transform="translate(264,572)"><rect x="3" y="16" width="35" height="21" fill="#f89aac"/><rect x="3" y="19" width="35" height="2" fill="#fff"/><rect x="3" y="29" width="35" height="2" fill="#fff"/><rect x="10" y="16" width="3" height="21" fill="#fff"/><rect x="28" y="16" width="3" height="21" fill="#fff"/><path d="M20 15L13 7L13 15ZM20 15L28 7L28 15Z" fill="#f78fa0"/></g>
<g transform="translate(312,572)"><rect x="3" y="10" width="34" height="25" fill="#f45a5a"/><path d="M4 14H37M4 19H37M4 24H37M4 29H37M4 33H37" stroke="#fff" stroke-width="1.5" stroke-dasharray="2 2"/><path d="M3 20H37" stroke="#f9c24d" stroke-width="1.3"/><path d="M16 16L20 20L24 16L23 25H17Z" fill="#f1433f"/></g>
<g transform="translate(360,572)"><rect x="4" y="4" width="33" height="33" fill="#1f5f80"/><path d="M4 12L12 4M4 26L26 4M4 37L37 4M16 37L37 16M30 37L37 30" stroke="#fff" stroke-width="1.5"/><rect x="19" y="4" width="3" height="33" fill="#ee7b95"/><rect x="4" y="19" width="33" height="3" fill="#ee7b95"/><circle cx="20.5" cy="20.5" r="6" fill="#dd6f89"/></g>
<!-- row 7 -->
<g transform="translate(72,620)"><rect x="6" y="2" width="29" height="35" fill="#4fbdb9"/><path d="M9 22h24M9 26h24M9 30h24M9 34h24M9 7h7M24 7h9" stroke="#bce7e2" stroke-dasharray="2 3"/><rect x="6" y="12" width="29" height="3" fill="#fbdc80"/><rect x="14" y="2" width="3" height="35" fill="#fbdc80"/><path d="M15 18L7 10L14 12ZM15 18L23 10L16 12Z" fill="#fcc13b"/></g>
<g transform="translate(120,620)"><rect x="2" y="15" width="36" height="9" fill="#f76f6f"/><path d="M3 18H38M3 21H38" stroke="#fff" stroke-dasharray="2 1.5"/><path d="M8 15L11 9L14 13L16 15ZM20 15L23 11L26 15" fill="#d84a4a"/></g>
<g transform="translate(168,620)"><path d="M24 36L18 16" stroke="#ef5b76" stroke-width="3"/><path d="M24 36L18 16" stroke="#fff" stroke-width="3" stroke-dasharray="2 3"/><path d="M12 14C9 3 24 1 26 10C27 16 22 17 20 15" stroke="#ef5b76" stroke-width="3"/><path d="M14 22L20 18L27 20L24 25L20 22L15 27Z" fill="#ef5b76"/></g>
<g transform="translate(216,620)"><path d="M27 37L21 14C19 7 12 8 12 12" stroke="#fbd16a" stroke-width="3"/><path d="M27 37L21 14C19 7 12 8 12 12" stroke="#fff" stroke-width="3" stroke-dasharray="1.5 4"/></g>
<g transform="translate(264,620)"><path d="M28 37L20 12C18 6 14 7 13 12" stroke="#7a9fe0" stroke-width="3"/><path d="M28 37L20 12C18 6 14 7 13 12" stroke="#fff" stroke-width="2.5" stroke-dasharray="1.5 4"/></g>
<g transform="translate(312,620)"><circle cx="20" cy="9" r="6" fill="#fcd26e"/><path d="M15 15H25L32 21L29 24L25 21L25 26L31 34L26 37L20 30L14 37L9 34L15 26V21L11 24L8 21Z" fill="#fcd26e"/><path d="M16.5 11C18 13 22 13 23.5 11" stroke="#d62f2f"/><circle cx="20" cy="18" r="1" fill="#fff"/><circle cx="20" cy="23" r="1" fill="#fff"/></g>
<g transform="translate(360,620)"><circle cx="20" cy="13" r="8" fill="#eea163"/><path d="M13 10C13 4 22 2 27 4C31 6 33 10 32 12L22 9Z" fill="#cc2131"/><rect x="14" y="19" width="12" height="11" rx="3" fill="#eea163"/><path d="M14 21L8 25M26 21L32 25M16 30L13 37M24 30L27 37" stroke="#eea163" stroke-width="4"/><circle cx="20" cy="23" r="1" fill="#fff"/><circle cx="20" cy="27" r="1" fill="#fff"/><path d="M16 15C18 17 22 17 24 15" stroke="#8a2420"/></g>
<!-- row 8 -->
<g transform="translate(72,668)"><path d="M8 28C8 14 16 4 24 4C32 4 33 16 33 28Z" fill="#cc1237"/><circle cx="9" cy="17" r="2.5" fill="#f6f0e3"/><rect x="8" y="26" width="26" height="9" rx="4" fill="#f6f0e3"/></g>
<g transform="translate(120,668)"><path d="M4 24C10 19 14 6 24 6C32 6 34 16 34 24Z" fill="#cc1237"/><path d="M4 24C12 30 28 30 36 24L35 30C26 35 12 34 5 30Z" fill="#f6f0e3"/><circle cx="35" cy="24" r="2.5" fill="#f6f0e3"/></g>
<g transform="translate(168,668)"><rect x="9" y="4" width="16" height="9" rx="2" fill="#f6f0e3"/><path d="M10 12H25V24L33 31C35 35 32 37 28 36L17 33C12 30 9 26 10 20Z" fill="#cc1237"/><circle cx="17" cy="18" r="3" fill="#fff"/></g>
<g transform="translate(216,668)"><rect x="12" y="3" width="23" height="9" rx="2" fill="#f6f0e3"/><path d="M14 11H34V28C34 33 33 36 29 36H21L20 30C16 30 14 26 14 20Z" fill="#cc1237"/><circle cx="12" cy="30" r="5.5" fill="#f6f0e3"/><circle cx="33" cy="30" r="4" fill="#f6f0e3"/></g>
<g transform="translate(264,668)"><path d="M10 8L26 3L29 10L14 15Z" fill="#f6f0e3"/><path d="M13 14L28 10L30 22C32 26 32 29 28 31L17 36C12 34 11 30 14 26Z" fill="#f25772"/><path d="M16 18h10M17 23h10M17 28h8" stroke="#fff" stroke-width="2" stroke-dasharray="2 2"/><circle cx="10" cy="31" r="5" fill="#f6f0e3"/><circle cx="31" cy="26" r="3.5" fill="#f6f0e3"/></g>
<g transform="translate(312,668)"><path d="M13 13L20 2L26 16" stroke="#cc1237"/><path d="M6 16C8 13 16 13 18 18L17 29C16 32 12 32 10 30L7 26C5 24 4 18 6 16Z" fill="#c61234"/><path d="M22 20C24 17 33 17 35 20C36 28 36 32 33 36C28 37 26 34 25 30C22 28 21 24 22 20Z" fill="#c61234"/><rect x="7" y="13" width="10" height="4" rx="2" fill="#f6f0e3"/><rect x="24" y="17" width="10" height="4" rx="2" fill="#f6f0e3"/></g>
<g transform="translate(360,668)"><path d="M3 11L14 7L18 28C14 32 7 30 5 26Z" fill="#f98ca0"/><path d="M17 13L27 6L37 25C33 32 26 32 23 28Z" fill="#f98ca0"/><path d="M3 11L14 7L14.5 11L4 15ZM17 13L27 6L29 9L19 16Z" fill="#fbd7dd"/><path d="M8 17L13 17L11 24ZM24 17L29 16L28 23Z" fill="#fff"/></g>
<!-- row 9 -->
<g transform="translate(72,716)"><path d="M11 10C11 4 29 4 29 10C31 14 31 22 30 26H24L25 17C22 21 18 21 15 17L16 26H10C9 22 9 14 11 10Z" fill="#cc1237"/><path d="M14 11H26L20 19Z" fill="#fff"/><path d="M9 27H18V33C16 37 10 36 10 33ZM22 27H31V33C29 37 24 36 22 33Z" fill="#cc1237"/><path d="M12 27L16 33M24 33L28 27" stroke="#fff" stroke-width="1.5"/></g>
<g transform="translate(120,716)"><path d="M10 38C5 26 13 18 20 18C27 18 35 26 30 38" stroke="#cc1237" stroke-width="2"/><path d="M15 20C7 16 5 8 7 2L10 8L13 6L15 12L17 11ZM25 20C33 16 35 8 33 2L30 8L27 6L25 12L23 11Z" fill="#3a9a68"/></g>
<g transform="translate(168,716)"><path d="M10 38C6 28 12 21 20 21C28 21 34 28 30 38" stroke="#cc1237" stroke-width="2"/><path d="M13 22C4 20 1 12 5 3L9 7L12 3L15 9L17 14ZM27 22C36 20 39 12 35 3L31 7L28 3L25 9L23 14Z" fill="#c61234"/><circle cx="9" cy="14" r="1.3" fill="#fff"/><circle cx="13" cy="11" r="1.3" fill="#fff"/><circle cx="31" cy="14" r="1.3" fill="#fff"/><circle cx="27" cy="11" r="1.3" fill="#fff"/><path d="M13 21L27 21" stroke="#3a9a68" stroke-width="2" stroke-dasharray="3 5"/></g>
<g transform="translate(216,716)"><path d="M20 6L25 16L36 18L28 25L30 35L20 30L10 35L12 25L4 18L15 16Z" fill="#fdc94c" stroke="#fdc94c" stroke-linejoin="round" stroke-width="1.5"/></g>
<g transform="translate(264,716)"><path d="M20 7L24.5 16L34 18L27 24.5L29 33.5L20 29L11 33.5L13 24.5L6 18L15.500 16Z" stroke="#2cbcb6" stroke-width="3.5" stroke-linejoin="round"/></g>
<use href="#fl" x="312" y="716" style="color:#7da2e8;stroke-width:1.3"/>
<use href="#fl" x="360" y="716" style="color:#70d1c2;stroke-width:1.1"/>
<!-- row 10 -->
<use href="#fl" x="72" y="764" style="color:#ff7f7f;stroke-width:1.4"/>
<use href="#fl2" x="120" y="764" style="color:#fdcf5f"/>
<use href="#fl2" x="168" y="764" style="color:#7ad6a0"/>
<use href="#fl2" x="216" y="764" style="color:#53c1c0"/>
<use href="#fl" x="264" y="764" style="color:#bfdc72;stroke-width:2"/>
<use href="#fl" x="312" y="764" style="color:#f8cfdd;stroke-width:1.5"/>
<use href="#fl" x="360" y="764" style="color:#c8b8f7;stroke-width:1.5"/>
<!-- row 11 -->
<use href="#fl" x="72" y="812" style="color:#5cc4c0;stroke-width:1.9"/>
<use href="#fl" x="120" y="812" style="color:#7da2e8;stroke-width:1.3"/>
<use href="#fl" x="168" y="812" style="color:#6ad0cc;stroke-width:1.1"/>
<use href="#fl" x="216" y="812" style="color:#cfe388;stroke-width:1.3"/>
<use href="#fl" x="264" y="812" style="color:#98dcb4;stroke-width:1.3"/>
<use href="#fl" x="312" y="812" style="color:#fde09a;stroke-width:1.9"/>
<path d="M363 826L372 829L376 832L382 832L388 834L396 836L397 840L384 838L375 840L366 836Z" fill="#2e8b46" stroke="#2e8b46"/>
</g>

<!-- ruler -->
<rect x="463" y="168" width="799" height="17" fill="#fff"/>
<rect x="478" y="168" width="784" height="17" fill="url(#rh)"/>
<rect x="463" y="185" width="15" height="627" fill="url(#rv)"/>
<path d="M463 185.5H1262M478.5 168V812M463 811.5H1262" stroke="#e6e7eb"/>

<!-- gifts -->
<use href="#gift" transform="translate(910,230) scale(.33333)"/>
<use href="#gift" transform="translate(709.5,325.7) scale(.2161)"/>
<use href="#gift" transform="translate(557.4,384) scale(.1446)"/>

<!-- selection -->
<rect x="723.5" y="329.5" width="158" height="173" stroke="#0a7cff" stroke-dasharray="4 3"/>
<use href="#sq" x="723.5" y="329.5"/><use href="#sq" x="802.5" y="329.5"/><use href="#sq" x="881.5" y="329.5"/><use href="#sq" x="723.5" y="415.5"/><use href="#sq" x="881.5" y="415.5"/><use href="#sq" x="723.5" y="502.5"/><use href="#sq" x="802.5" y="502.5"/><use href="#sq" x="881.5" y="502.5"/>
<path d="M806.5 302.5A4 4 0 10806.5 307.5M805.5 301V304H808.5" stroke="#2a8cff" stroke-width="1"/>

<!-- deer + candy -->
<g transform="translate(560,510) scale(.33333)" style="color:#d60000"><use href="#deer"/></g>
<g transform="translate(1182.7,510) scale(-.33333,.33333)" style="color:#d60000"><use href="#deer"/></g>

<g transform="translate(560,510) scale(.33333)">
<g fill="#ffc233" stroke="#ffc233" stroke-linejoin="round" stroke-width="4">
<polygon points="375,468 405,480 430,515 437,550 415,605 360,623 318,615 322,575 307,545 325,525 325,497 360,495"/>
<polygon points="640,620 680,593 735,600 730,630 748,655 738,700 710,705 685,745 640,720 615,680"/>
<ellipse cx="525" cy="610" rx="112" ry="86" transform="rotate(25 525 610)"/></g>
<g fill="#ffdd8c"><circle cx="465" cy="544" r="8"/><circle cx="500" cy="544" r="10"/><circle cx="540" cy="535" r="8"/><circle cx="577" cy="556" r="8"/><circle cx="439" cy="569" r="9"/><circle cx="508" cy="585" r="10"/><circle cx="558" cy="585" r="9"/><circle cx="613" cy="589" r="8"/><circle cx="465" cy="607" r="10"/><circle cx="532" cy="625" r="9"/><circle cx="584" cy="618" r="10"/><circle cx="626" cy="628" r="8"/><circle cx="433" cy="621" r="8"/><circle cx="487" cy="647" r="8"/><circle cx="566" cy="654" r="9"/><circle cx="605" cy="665" r="9"/><circle cx="532" cy="676" r="9"/></g>
</g>

<g transform="translate(810,510) scale(.33333)">
<polygon fill="#07738f" stroke="#07738f" stroke-width="4" stroke-linejoin="round" points="115,665 140,645 270,610 300,612 320,650 312,682 150,723 125,715 112,700"/>
<polygon fill="#07738f" stroke="#07738f" stroke-width="3" stroke-linejoin="round" points="33,680 75,670 115,680 122,708 45,745 38,720"/>
<polygon fill="#07738f" stroke="#07738f" stroke-width="3" stroke-linejoin="round" points="310,625 375,587 388,595 408,650 370,658 320,650"/>
<g fill="#ff7c7e" stroke="#ff7c7e" stroke-width="3" stroke-linejoin="round">
<polygon points="430,422 445,430 458,480 440,505 410,545 370,545 340,532 355,490 365,455 405,445"/>
<polygon points="620,605 650,605 690,620 685,680 660,695 625,718 600,690 590,660"/>
<ellipse cx="510" cy="580" rx="118" ry="62" transform="rotate(33 510 580)"/></g>
<path d="M462 495C435 520 420 555 422 590M526 520C495 545 470 585 462 618M570 545C540 570 515 610 506 642M612 575C590 610 570 640 556 668" stroke="#fff" stroke-width="12"/>
</g>

<!-- floating pill icons -->
<path d="M1174 770L1181 767L1189 782L1183 785Z" stroke="#5a4ff0" stroke-width="1.3"/><path d="M1176 778l1 2 2 1-2 1-1 2-1-2-2-1 2-1Z" fill="#5a4ff0"/><path d="M1186 768l.8 1.5 1.5.8-1.5.7-.8 1.5-.8-1.5-1.5-.7 1.5-.8Z" fill="#5a4ff0"/>
<path d="M1220 766C1221 772 1223 775 1229 776C1223 777 1221 780 1220 786C1219 780 1217 777 1211 776C1217 775 1219 772 1220 766Z" fill="#3a5cf5"/><path d="M1228 766l.8 2 2 .8-2 .8-.8 2-.8-2-2-.8 2-.8Z" fill="#3a5cf5"/>

<!-- right panel -->
<path d="M1296 178L1290 184L1296 190M1303 178L1297 184L1303 190" stroke="#444" stroke-width="1.7"/>
<path d="M1296 208L1305 217L1296 226L1287 217Z" stroke="#333" stroke-width="1.8" stroke-linejoin="round"/><path d="M1287 217H1305L1296 226Z" fill="#333"/><circle cx="1303" cy="224" r="1.5" fill="#333"/>
<path d="M1289.5 254H1299L1303 258V270H1289.5Z" stroke="#333" stroke-width="1.6" stroke-linejoin="round"/><path d="M1292 261H1293.5M1295.5 261H1300.5M1292 264.5H1293.5M1295.5 264.5H1300.5M1292 267.5H1293.5M1295.5 267.5H1300.5" stroke="#333" stroke-width="1.3"/>
<rect x="1288" y="299" width="17" height="17" stroke="#fff" stroke-width="1.6"/><path d="M1288 303H1305" stroke="#fff" stroke-width="1.6"/><path d="M1294 306.5V313L1300 309.7Z" fill="#fff"/>
<use href="#gear" transform="translate(1296,827)"/>
<path d="M478 829L473 834L477 839L482 836Z" stroke="#333" stroke-width="1.4"/><path d="M473.5 834H482L477 839Z" fill="#333"/><circle cx="484" cy="838" r="1" fill="#333"/><use href="#dd" x="487" y="832"/>

<!-- status -->
<path d="M48.5 849V869M178.5 849V869M218.5 849V869M291.5 849V869M649.5 849V869M775.5 849V869M857.5 849V869M1008.5 849V869M1235.5 849V869" stroke="#d8d9dd"/>
<path d="M19.5 854V866M35.5 854V866M22.5 854.5H33V865.5H22.5Z" stroke="#333"/>
<path d="M157 857h7l-3.5 4z" fill="#666"/>
<path d="M198.5 853V866M192 859.5H205" stroke="#333" stroke-width="1.2"/>
<path d="M878 853L886 859L878 864L870 859ZM870 862L878 868L886 862" stroke="#333"/><use href="#dd" x="890" y="858"/>
<path d="M913 856V853H917M925 853H929V856M913 863V866H917M925 866H929V863" stroke="#333"/><rect x="917.5" y="855.5" width="6" height="9" stroke="#333"/>
<circle cx="988" cy="859" r="7.5" stroke="#333"/><path d="M986 855.5V862.5L991 859Z" stroke="#333"/>
<path d="M1020 859H1030M1148 859H1159M1153.5 853V865" stroke="#333" stroke-width="1.1"/>
<rect x="1041" y="858" width="96" height="2" rx="1" fill="#fff"/><rect x="1041" y="858" width="53" height="2.5" rx="1" fill="#444"/><circle cx="1094" cy="859" r="4.5" fill="#fff" stroke="#333" stroke-width="1.3"/>
<use href="#dd" x="1214" y="858"/>
<path d="M1245 855L1250 853L1255 855L1260 853V865L1255 867L1250 865L1245 867ZM1250 853V865M1255 855V867" stroke="#333"/>
<path d="M1278 855V852H1290V855M1278 863V866H1290V863" stroke="#333"/><rect x="1281.5" y="855.5" width="6" height="7" stroke="#333"/>
<!-- ruler labels -->
<g font-family="Liberation Sans,sans-serif" font-size="9" fill="#888">
<text x="481" y="179">0</text><text x="525" y="179">5</text><text x="568" y="179">10</text><text x="612" y="179">15</text><text x="655" y="179">20</text><text x="699" y="179">25</text><text x="743" y="179">30</text><text x="786" y="179">35</text><text x="830" y="179">40</text><text x="873" y="179">45</text><text x="917" y="179">50</text><text x="961" y="179">55</text><text x="1004" y="179">60</text><text x="1048" y="179">65</text><text x="1091" y="179">70</text><text x="1132" y="179">75</text><text x="1177" y="179">80</text><text x="1221" y="179">85</text>
<text transform="translate(473,196) rotate(-90)">5</text><text transform="translate(473,245) rotate(-90)">10</text><text transform="translate(473,288) rotate(-90)">15</text><text transform="translate(473,332) rotate(-90)">20</text><text transform="translate(473,376) rotate(-90)">25</text><text transform="translate(473,419) rotate(-90)">30</text><text transform="translate(473,463) rotate(-90)">35</text><text transform="translate(473,506) rotate(-90)">40</text><text transform="translate(473,550) rotate(-90)">45</text><text transform="translate(473,594) rotate(-90)">50</text><text transform="translate(473,637) rotate(-90)">55</text><text transform="translate(473,681) rotate(-90)">60</text><text transform="translate(473,724) rotate(-90)">65</text><text transform="translate(473,767) rotate(-90)">70</text><text transform="translate(473,810) rotate(-90)">75</text>
</g>
</svg>

<!-- text -->
<span class="t" style="left:48px;top:12px;letter-spacing:-.1px">Wondershare EdrawMax</span>
<span class="t" style="left:189px;top:12px;color:#7a4f00">Pro</span>
<span class="t" style="left:291px;top:12px">Zeichnun...</span>
<span class="t" style="left:408px;top:12px">Gifts For Chr...</span>
<span class="t" style="left:525px;top:12px">Gifts For Chr...</span>
<span class="t" style="left:642px;top:12px">Merry Christ...</span>
<span class="t" style="left:759px;top:12px">Merry Christ...</span>
<span class="t" style="left:876px;top:12px">Zeichnun...</span>
<span class="t" style="left:993px;top:12px">Zeichnun...</span>
<span class="t" style="left:1167px;top:11px;color:#fff;font-size:13px">W</span>
<span class="t" style="left:64px;top:45px">Datei</span>
<span class="t" style="left:369px;top:45px">Start</span>
<span class="t" style="left:425px;top:45px">Einfügen</span>
<span class="t" style="left:503px;top:45px;color:#0a7cff;font-weight:bold">Design</span>
<span class="t" style="left:572px;top:45px">Ansicht</span>
<span class="t" style="left:644px;top:45px">Symbole</span>
<span class="t" style="left:722px;top:45px">Erweitert</span>
<span class="t" style="left:800px;top:45px">KI</span>
<span class="t" style="left:816px;top:36px;color:#fff;font-size:10.5px">hot</span>
<span class="t" style="left:1003px;top:45px">Veröffentlichen</span>
<span class="t" style="left:1111px;top:45px">Teilen</span>
<span class="t" style="left:1171px;top:45px">Optionen</span>
<span class="t" style="left:1236px;top:45px;font-size:10px">?</span>
<span class="c" style="left:56px;top:103px;letter-spacing:-.1px">Verschönern</span>
<span class="c" style="left:56px;top:118px;letter-spacing:-.1px">per Mausklick</span>
<span class="t" style="left:324px;top:80px">Farbe</span>
<span class="t" style="left:323px;top:100px">Zugang</span>
<span class="t" style="left:323px;top:120px">Text</span>
<span class="c" style="left:454px;top:109px">Hintergrundfarbe</span>
<span class="c" style="left:558px;top:109px;letter-spacing:-.1px">Hintergrundbild</span>
<span class="c" style="left:662px;top:103px">Ränder und</span>
<span class="c" style="left:662px;top:118px">Überschriften</span>
<span class="c" style="left:762px;top:109px;letter-spacing:-.3px">Wasserzeichen</span>
<span class="c" style="left:867px;top:103px">Automatisch</span>
<span class="c" style="left:867px;top:118px">anpassen</span>
<span class="c" style="left:955px;top:103px">An Zeichnung</span>
<span class="c" style="left:955px;top:118px">anpassen</span>
<span class="c" style="left:1041px;top:109px">Ausrichtung</span>
<span class="c" style="left:1120px;top:109px;letter-spacing:-.2px">Seitengröße</span>
<span class="c" style="left:1195px;top:109px">Sprungstil</span>
<span class="c" style="left:1255px;top:109px">Einheit</span>
<span class="t" style="left:1116px;top:83px;font-size:7.5px;color:#555">A4</span>
<span class="c g" style="left:196px;top:144px;font-size:11px">Verschönern</span>
<span class="c g" style="left:605px;top:144px;font-size:11px">Hintergrund</span>
<span class="c g" style="left:1054px;top:144px;font-size:11px">Seiteneinrichtung</span>
<span class="c s" style="left:28px;top:239px">Vorlagen</span>
<span class="c s" style="left:28px;top:299px">Symbole</span>
<span class="c s" style="left:28px;top:359px">Text</span>
<span class="c s" style="left:28px;top:419px">Bilder</span>
<span class="c s" style="left:28px;top:479px">Ikone</span>
<span class="c s" style="left:28px;top:539px;color:#0a7cff">Aufkleber</span>
<span class="c s" style="left:28px;top:599px">Diagram...</span>
<span class="c s" style="left:28px;top:659px">Widgets</span>
<span class="t" style="left:72px;top:185px;font-weight:bold">Aufkleber</span>
<span class="t" style="left:381px;top:185px;color:#0a7cff">AI Aufkleber</span>
<span class="t" style="left:103px;top:225px;font-size:12.5px">Weihnacht</span>
<span class="t" style="left:92px;top:265px;font-weight:bold;font-size:13px">Weihnacht</span>
<span class="t" style="left:65px;top:853px">Seite-1</span>
<span class="t" style="left:234px;top:853px;color:#0a7cff;font-weight:bold">Seite-1</span>
<span class="t" style="left:658px;top:852px;letter-spacing:-.1px">Anzahl an Formen: 8</span>
<span class="t" style="left:783px;top:852px;letter-spacing:-.1px">Form-ID:149</span>
<span class="t" style="left:935px;top:852px">Fokus</span>
<span class="t" style="left:1177px;top:852px">230%</span>
</body></html>
